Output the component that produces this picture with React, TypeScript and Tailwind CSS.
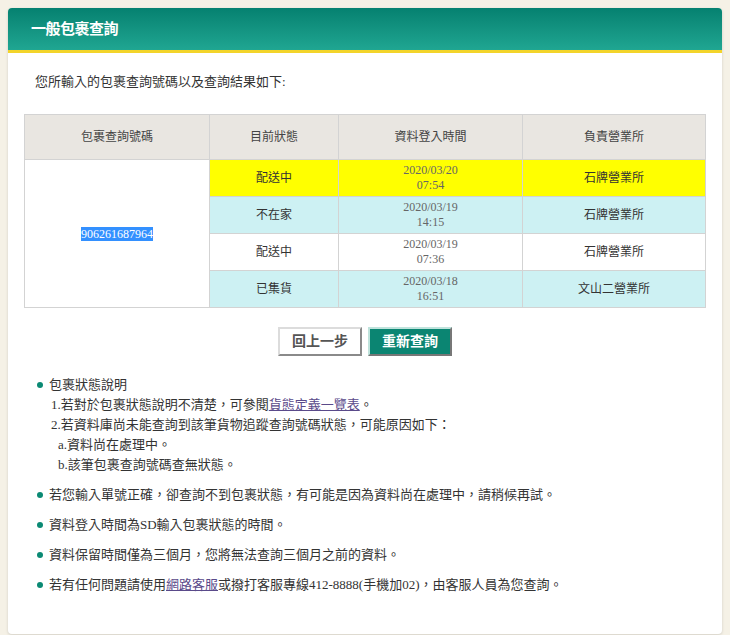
import React from 'react';

const rows = [
  { status: '配送中', date: '2020/03/20', time: '07:54', office: '石牌營業所', bg: 'bg-[#ffff00]' },
  { status: '不在家', date: '2020/03/19', time: '14:15', office: '石牌營業所', bg: 'bg-[#cdf1f3]' },
  { status: '配送中', date: '2020/03/19', time: '07:36', office: '石牌營業所', bg: 'bg-white' },
  { status: '已集貨', date: '2020/03/18', time: '16:51', office: '文山二營業所', bg: 'bg-[#cdf1f3]' },
];

function Bullet({ children }: { children: React.ReactNode }) {
  return (
    <li className="flex items-start">
      <span className="mt-[7px] mr-[6px] ml-[2px] block h-[6px] w-[6px] shrink-0 rounded-full bg-[#0b8a74]" />
      <div>{children}</div>
    </li>
  );
}

export default function App() {
  return (
    <div
      className="min-h-[635px] bg-[#f5f1e6] p-2 text-[13px] text-[#333]"
      style={{ fontFamily: '"Liberation Serif", "Noto Sans CJK TC", serif' }}
    >
      <div className="overflow-hidden rounded-[4px] bg-white shadow-[0_1px_3px_rgba(0,0,0,0.15)]">
        <div className="h-[42px] bg-gradient-to-b from-[#058170] to-[#1fa692] flex items-center pl-[23px]">
          <h1 className="text-[15px] font-bold text-white tracking-[-0.5px]">一般包裹查詢</h1>
        </div>
        <div className="h-[3px] bg-[#f3d42a]" />

        <div className="px-4 pt-[20px] pb-[39px]">
          <p className="pl-[11px] leading-[18px]">您所輸入的包裹查詢號碼以及查詢結果如下:</p>

          <table className="mt-[23px] w-[682px] border-collapse text-center text-[12px]">
            <thead>
              <tr className="h-[45px] bg-[#e9e6e1] text-[#444]">
                <th className="w-[185px] border border-[#d3d3d3] font-normal">包裹查詢號碼</th>
                <th className="w-[129px] border border-[#d3d3d3] font-normal">目前狀態</th>
                <th className="w-[184px] border border-[#d3d3d3] font-normal">資料登入時間</th>
                <th className="border border-[#d3d3d3] font-normal">負責營業所</th>
              </tr>
            </thead>
            <tbody>
              {rows.map((r, i) => (
                <tr key={i} className={`h-[37px] ${r.bg}`}>
                  {i === 0 && (
                    <td rowSpan={4} className="border border-[#d3d3d3] bg-white">
                      <span className="bg-[#3390ff] text-white">906261687964</span>
                    </td>
                  )}
                  <td className="border border-[#d3d3d3]">{r.status}</td>
                  <td className="border border-[#d3d3d3] leading-[15px] text-[#666]">
                    {r.date}
                    <br />
                    {r.time}
                  </td>
                  <td className="border border-[#d3d3d3]">{r.office}</td>
                </tr>
              ))}
            </tbody>
          </table>

          <div className="mt-[19px] flex justify-center gap-[6px]">
            <button className="h-[29px] w-[84px] border-2 border-t-[#dcdcdc] border-l-[#dcdcdc] border-r-[#8a8a8a] border-b-[#8a8a8a] bg-white text-[14px] font-bold text-[#555]">
              回上一步
            </button>
            <button className="h-[29px] w-[84px] border-2 border-t-[#bfe3dc] border-l-[#bfe3dc] border-r-[#777] border-b-[#777] bg-[#0b8572] text-[14px] font-bold text-white">
              重新查詢
            </button>
          </div>

          <ul className="mt-[19px] pl-[11px] leading-[20px] space-y-[10px]">
            <Bullet>
              包裹狀態說明
              <div className="pl-[2px]">
                1.若對於包裹狀態說明不清楚，可參閱
                <a className="text-[#5a4a8a] underline" href="#">貨態定義一覽表</a>。
              </div>
              <div className="pl-[2px]">2.若資料庫尚未能查詢到該筆貨物追蹤查詢號碼狀態，可能原因如下：</div>
              <div className="pl-[9px]">a.資料尚在處理中。</div>
              <div className="pl-[9px]">b.該筆包裹查詢號碼查無狀態。</div>
            </Bullet>
            <Bullet>若您輸入單號正確，卻查詢不到包裹狀態，有可能是因為資料尚在處理中，請稍候再試。</Bullet>
            <Bullet>資料登入時間為SD輸入包裹狀態的時間。</Bullet>
            <Bullet>資料保留時間僅為三個月，您將無法查詢三個月之前的資料。</Bullet>
            <Bullet>
              若有任何問題請使用
              <a className="text-[#5a4a8a] underline" href="#">網路客服</a>
              或撥打客服專線412-8888(手機加02)，由客服人員為您查詢。
            </Bullet>
          </ul>
        </div>
      </div>
    </div>
  );
}
